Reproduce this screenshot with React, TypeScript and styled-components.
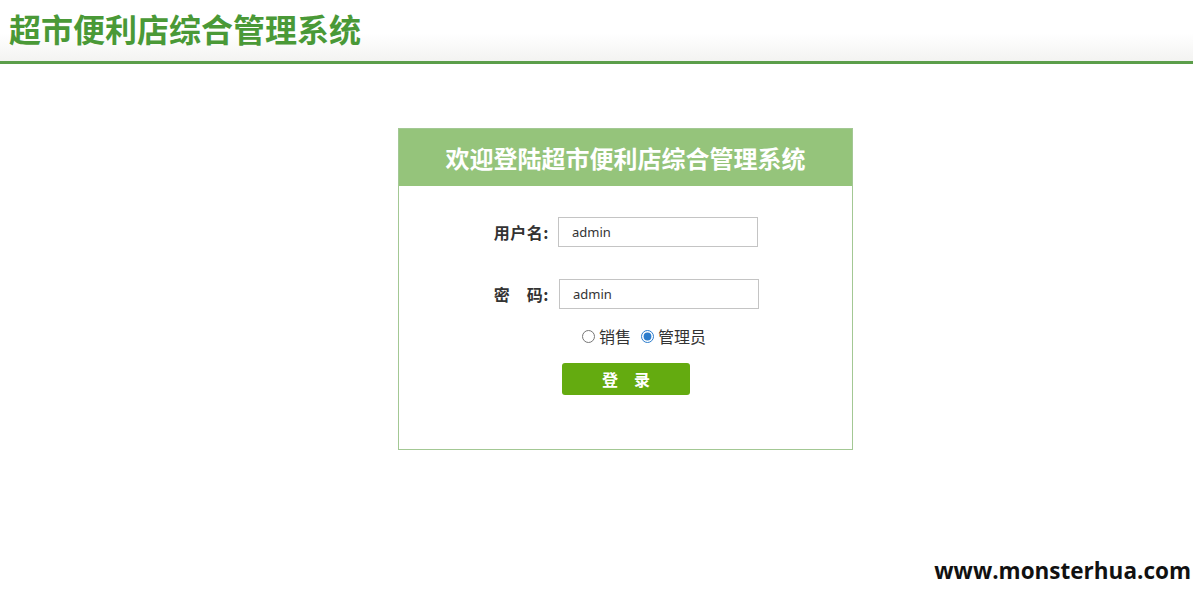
import React from 'react';
import styled, { createGlobalStyle } from 'styled-components';

const GlobalStyle = createGlobalStyle`
  html, body {
    margin: 0;
    padding: 0;
    background: #ffffff;
    font-family: "Noto Sans", "Noto Sans CJK SC", sans-serif;
    color: #333;
  }
`;

const Page = styled.div`
  position: relative;
  width: 1193px;
  height: 600px;
  overflow: hidden;
`;

const TopBar = styled.header`
  height: 61px;
  padding-left: 9px;
  display: flex;
  align-items: center;
  background: linear-gradient(#ffffff 55%, #f3f3f1);
  border-bottom: 3px solid #5b9e4a;
`;

const SiteTitle = styled.h1`
  margin: 0;
  font-family: "Noto Sans CJK SC", sans-serif;
  font-size: 32px;
  font-weight: 700;
  color: #4a9937;
  line-height: 1;
  margin-top: -6px;
`;

const Card = styled.section`
  width: 453px;
  margin: 64px 0 0 398px;
  border: 1px solid #a3c894;
  background: #fff;
`;

const CardHead = styled.div`
  height: 57px;
  display: flex;
  align-items: center;
  justify-content: center;
  background: #95c47b;
  color: #fff;
  font-family: "Noto Sans CJK SC", sans-serif;
  font-size: 24px;
  font-weight: 700;
`;

const Form = styled.form`
  display: grid;
  grid-template-columns: 150px 201px;
  column-gap: 9px;
  padding: 31px 0 54px;
`;

const Label = styled.label<{ $top?: number }>`
  display: flex;
  align-items: center;
  justify-content: flex-end;
  font-family: "Noto Sans CJK SC", sans-serif;
  font-size: 16px;
  font-weight: 700;
  color: #333;
  white-space: pre;
  letter-spacing: 0.5px;
  margin-top: ${(p) => p.$top ?? 0}px;
`;

const Input = styled.input<{ $top?: number; $shift?: number }>`
  box-sizing: border-box;
  width: 200px;
  height: 30px;
  border: 1px solid #c4c4c4;
  padding: 0 13px;
  font-family: "Noto Sans", "Noto Sans CJK SC", sans-serif;
  font-size: 13px;
  color: #333;
  outline: none;
  margin-top: ${(p) => p.$top ?? 0}px;
  margin-left: ${(p) => p.$shift ?? 0}px;
`;

const RoleRow = styled.div`
  grid-column: 2;
  display: flex;
  align-items: center;
  height: 20px;
  margin-top: 17px;
  padding-left: 19px;
  font-family: "Noto Sans CJK SC", sans-serif;
  font-size: 16px;
  color: #333;
`;

const Role = styled.label`
  display: flex;
  align-items: center;
  margin-right: 5px;

  input {
    margin: 0 4px 0 5px;
    width: 13px;
    height: 13px;
    accent-color: #2b7ccc;
  }
`;

const Submit = styled.button`
  grid-column: 2;
  width: 128px;
  height: 32px;
  margin: 17px 0 0 4px;
  border: none;
  border-radius: 3px;
  background: #64ab10;
  color: #fff;
  font-family: "Noto Sans CJK SC", sans-serif;
  font-size: 16px;
  font-weight: 700;
  cursor: pointer;
`;

const Watermark = styled.div`
  position: absolute;
  right: 0;
  bottom: 0;
  width: 261px;
  height: 59px;
  display: flex;
  align-items: center;
  justify-content: flex-end;
  padding-right: 2px;
  box-sizing: border-box;
  background: #fff;
  font-family: "Open Sans", sans-serif;
  font-size: 22.5px;
  font-weight: 700;
  color: #111;
`;

const App = () => {
  return (
    <Page>
      <GlobalStyle />
      <TopBar>
        <SiteTitle>超市便利店综合管理系统</SiteTitle>
      </TopBar>
      <Card>
        <CardHead>欢迎登陆超市便利店综合管理系统</CardHead>
        <Form onSubmit={(e) => e.preventDefault()}>
          <Label htmlFor="user">用户名:</Label>
          <Input id="user" defaultValue="admin" />
          <Label htmlFor="pwd" $top={32}>密　码:</Label>
          <Input id="pwd" type="text" defaultValue="admin" $top={32} $shift={1} />
          <RoleRow>
            <Role>
              <input type="radio" name="role" value="sale" />
              销售
            </Role>
            <Role>
              <input type="radio" name="role" value="admin" defaultChecked />
              管理员
            </Role>
          </RoleRow>
          <Submit type="submit">登　录</Submit>
        </Form>
      </Card>
      <Watermark>www.monsterhua.com</Watermark>
    </Page>
  );
};

export default App;
